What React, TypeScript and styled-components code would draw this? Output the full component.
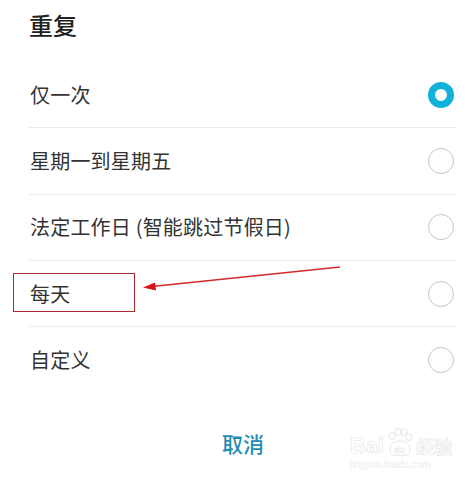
import React from "react";
import styled, { createGlobalStyle } from "styled-components";

const Global = createGlobalStyle`
  html, body { margin: 0; padding: 0; background: #ffffff; }
  body { font-family: "Noto Sans CJK SC", "Noto Sans", sans-serif; }
`;

const Dialog = styled.div`
  position: relative;
  width: 468px;
  height: 477px;
  background: #ffffff;
  overflow: hidden;
`;

const Title = styled.h1`
  margin: 0;
  padding-left: 29px;
  height: 50px;
  line-height: 50px;
  font-size: 24px;
  font-weight: 500;
  color: #222222;
`;

const List = styled.ul`
  list-style: none;
  margin: 12px 12px 0 29px;
  padding: 0;
`;

const Row = styled.li<{ $last?: boolean }>`
  box-sizing: border-box;
  height: 66.33px;
  display: flex;
  align-items: center;
  justify-content: space-between;
  padding: 0 2px 0 1px;
  border-bottom: ${(p) => (p.$last ? "none" : "1px solid #ebebeb")};
`;

const Label = styled.span`
  font-size: 20px;
  color: #333333;
  line-height: 1;
  letter-spacing: 0.2px;
`;

const Radio = styled.span<{ $checked?: boolean }>`
  box-sizing: border-box;
  width: 26px;
  height: 26px;
  border-radius: 50%;
  border: ${(p) => (p.$checked ? "7px solid #12b1da" : "1.5px solid #c6c6c6")};
  background: #ffffff;
`;

const Footer = styled.div`
  display: flex;
  justify-content: center;
  padding: 36px 0 0 18px;
`;

const Cancel = styled.button`
  border: none;
  background: none;
  padding: 0;
  font-family: inherit;
  font-size: 21px;
  line-height: 26px;
  font-weight: 500;
  color: #1f8db3;
`;

const Highlight = styled.div`
  position: absolute;
  left: 13px;
  top: 273px;
  width: 122px;
  height: 39px;
  box-sizing: border-box;
  border: 1px solid #b0262d;
`;

const ArrowLayer = styled.svg`
  position: absolute;
  left: 0;
  top: 0;
  pointer-events: none;
`;

const Watermark = styled.div`
  position: absolute;
  left: 350px;
  top: 428px;
  display: flex;
  flex-direction: column;
  align-items: flex-start;
  color: #ffffff;
  -webkit-text-stroke: 0.7px #e8e8e8;
  font-family: "Liberation Sans", Arial, sans-serif;
`;

const MarkTop = styled.div`
  display: flex;
  align-items: flex-end;
  gap: 2px;
  font-size: 22px;
  font-weight: 700;
  line-height: 24px;
`;

const MarkCjk = styled.span`
  font-family: "Noto Sans CJK SC", sans-serif;
  font-size: 18px;
  font-weight: 700;
`;

const MarkUrl = styled.div`
  font-size: 10px;
  line-height: 12px;
  color: #ececec;
  -webkit-text-stroke: 0;
  margin-top: 1px;
`;

const options = [
  { label: "仅一次", checked: true },
  { label: "星期一到星期五" },
  { label: "法定工作日 (智能跳过节假日)" },
  { label: "每天" },
  { label: "自定义" },
];

export default function App() {
  return (
    <Dialog>
      <Global />
      <Title>重复</Title>
      <List>
        {options.map((o, i) => (
          <Row key={o.label} $last={i === options.length - 1}>
            <Label>{o.label}</Label>
            <Radio $checked={o.checked} />
          </Row>
        ))}
      </List>
      <Footer>
        <Cancel>取消</Cancel>
      </Footer>

      <Highlight />
      <ArrowLayer width="468" height="477" viewBox="0 0 468 477">
        <line x1="340" y1="267" x2="152" y2="286.5" stroke="#d42a2a" strokeWidth="1.4" />
        <polygon points="143,287.5 155,282.5 156,290.5" fill="#d8141a" />
      </ArrowLayer>

      <Watermark>
        <MarkTop>
          <span>Bai</span>
          <svg width="28" height="30" viewBox="0 0 28 30">
            <g fill="none" stroke="#e6e6e6" strokeWidth="1">
              <ellipse cx="6" cy="8" rx="3" ry="3.5" />
              <ellipse cx="12" cy="4" rx="3" ry="3.5" />
              <ellipse cx="18" cy="4" rx="3" ry="3.5" />
              <ellipse cx="23" cy="9" rx="3" ry="3.5" />
              <path d="M4 22 C4 15 9 13 14 13 C19 13 24 15 24 22 C24 28 18 28 14 27 C10 28 4 28 4 22 Z" />
            </g>
            <text x="8" y="25" fontSize="9" fill="#ffffff" stroke="#e6e6e6" strokeWidth="0.5" fontFamily="Liberation Sans, sans-serif">du</text>
          </svg>
          <MarkCjk>经验</MarkCjk>
        </MarkTop>
        <MarkUrl>jingyan.baidu.com</MarkUrl>
      </Watermark>
    </Dialog>
  );
}
